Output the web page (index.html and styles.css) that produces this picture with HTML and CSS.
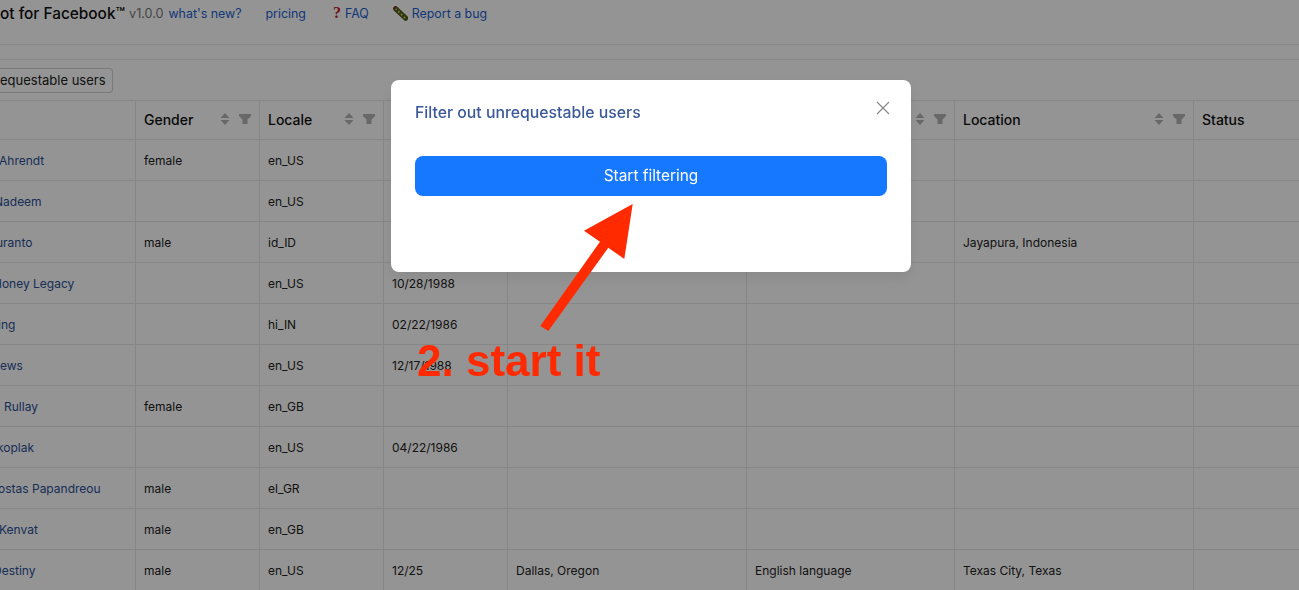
FILE: index.html
```html
<!DOCTYPE html>
<html lang="en">
<head>
  <meta charset="UTF-8" />
  <title>Filter out unrequestable users</title>
  <link rel="stylesheet" href="styles.css">
</head>
<body>
  <div class="page">
    <div class="topbar">
      <span class="brand">ot for Facebook™</span>
      <span class="version">v1.0.0</span>
      <a class="link link-new">what's new?</a>
      <a class="link link-pricing">pricing</a>
      <a class="link link-faq"><span class="mark">?</span>FAQ</a>
      <a class="link link-bug">
        <svg class="bug" viewBox="0 0 16 16" width="15" height="15">
          <path d="M3 3 L13.500 13" stroke="#4f5f1c" stroke-width="5.500" stroke-linecap="round"/>
          <path d="M1 1 L3 3" stroke="#8a3a1c" stroke-width="3.500"/>
          <path d="M4 3 L3 4 M7 5.500 L5.500 7 M10 8.500 L8.500 10 M13 11.500 L11.500 13" stroke="#c9c25c" stroke-width="1.800"/>
        </svg>
        Report a bug
      </a>
    </div>
    <div class="subbar"></div>
    <div class="toolbar">
      <button class="filter-btn">equestable users</button>
    </div>

    <table class="users">
      <colgroup>
        <col class="c-name"><col class="c-gender"><col class="c-locale"><col class="c-birth">
        <col class="c-home"><col class="c-lang"><col class="c-loc"><col class="c-status">
      </colgroup>
      <thead>
        <tr>
          <th></th>
          <th><div class="th-in">Gender<span class="tools"><svg class="sort" viewBox="0 0 10 14"><path d="M5 1 9.5 6H.5zM5 13 .5 8h9z"/></svg><svg class="funnel" viewBox="0 0 12 10"><path d="M0 0h12v2L8.500 5.500V10h-5V5.500L0 2z"/></svg></span></div></th>
          <th><div class="th-in">Locale<span class="tools"><svg class="sort" viewBox="0 0 10 14"><path d="M5 1 9.5 6H.5zM5 13 .5 8h9z"/></svg><svg class="funnel" viewBox="0 0 12 10"><path d="M0 0h12v2L8.500 5.500V10h-5V5.500L0 2z"/></svg></span></div></th>
          <th></th>
          <th></th>
          <th><div class="th-in"><span class="tools"><svg class="sort" viewBox="0 0 10 14"><path d="M5 1 9.5 6H.5zM5 13 .5 8h9z"/></svg><svg class="funnel" viewBox="0 0 12 10"><path d="M0 0h12v2L8.500 5.500V10h-5V5.500L0 2z"/></svg></span></div></th>
          <th><div class="th-in">Location<span class="tools"><svg class="sort" viewBox="0 0 10 14"><path d="M5 1 9.5 6H.5zM5 13 .5 8h9z"/></svg><svg class="funnel" viewBox="0 0 12 10"><path d="M0 0h12v2L8.500 5.500V10h-5V5.500L0 2z"/></svg></span></div></th>
          <th>Status</th>
        </tr>
      </thead>
      <tbody>
        <tr><td><a class="cut-1">Ahrendt</a></td><td>female</td><td>en_US</td><td></td><td></td><td></td><td></td><td></td></tr>
        <tr><td><a class="cut-6">Nadeem</a></td><td></td><td>en_US</td><td></td><td></td><td></td><td></td><td></td></tr>
        <tr><td><a class="cut-4">uranto</a></td><td>male</td><td>id_ID</td><td></td><td></td><td></td><td>Jayapura, Indonesia</td><td></td></tr>
        <tr><td><a class="cut-7">Honey Legacy</a></td><td></td><td>en_US</td><td>10/28/1988</td><td></td><td></td><td></td><td></td></tr>
        <tr><td><a class="cut-2">ing</a></td><td></td><td>hi_IN</td><td>02/22/1986</td><td></td><td></td><td></td><td></td></tr>
        <tr><td><a>ews</a></td><td></td><td>en_US</td><td>12/17/1988</td><td></td><td></td><td></td><td></td></tr>
        <tr><td><a class="gap">Rullay</a></td><td>female</td><td>en_GB</td><td></td><td></td><td></td><td></td><td></td></tr>
        <tr><td><a class="cut-3">koplak</a></td><td></td><td>en_US</td><td>04/22/1986</td><td></td><td></td><td></td><td></td></tr>
        <tr><td><a class="cut-2">ostas Papandreou</a></td><td>male</td><td>el_GR</td><td></td><td></td><td></td><td></td><td></td></tr>
        <tr><td><a class="cut-1">Kenvat</a></td><td>male</td><td>en_GB</td><td></td><td></td><td></td><td></td><td></td></tr>
        <tr><td><a class="cut-7">Destiny</a></td><td>male</td><td>en_US</td><td>12/25</td><td>Dallas, Oregon</td><td>English language</td><td>Texas City, Texas</td><td></td></tr>
      </tbody>
    </table>
  </div>

  <div class="mask"></div>

  <div class="modal">
    <div class="modal-head">
      <h2>Filter out unrequestable users</h2>
      <svg class="close" viewBox="0 0 14 14" width="14" height="14"><path d="M1 1 13 13M13 1 1 13"/></svg>
    </div>
    <button class="start">Start filtering</button>
  </div>

  <svg class="arrow" viewBox="0 0 110 140" width="110" height="140">
    <path d="M102.700 4 94.300 59 78.300 47.700 18.300 131 10.300 126 70 41.700 54 30.700z"/>
  </svg>
  <div class="note">2. start it</div>
</body>
</html>
```

FILE: styles.css
```css
* {
  box-sizing: border-box;
  margin: 0;
  padding: 0;
}
html, body {
  height: 590px;
  overflow: hidden;
}
body {
  background: #fff;
  color: #222;
  font-family: Inter, "Liberation Sans", sans-serif;
  font-size: 12px;
}
.page {
  width: 1299px;
  height: 590px;
  overflow: hidden;
}
.topbar {
  display: flex;
  align-items: center;
  height: 45px;
  padding-bottom: 18px;
  border-bottom: 1px solid #e8e8e8;
  font-size: 12.4px;
  white-space: nowrap;
}
.brand {
  font-size: 15.4px;
  font-weight: 500;
  color: #111;
}
.version {
  margin-left: 4px;
  font-size: 12.6px;
  color: #777;
}
.link {
  color: #1d5fd0;
}
.link-new { margin-left: 5px; }
.link-pricing { margin-left: 24px; }
.link-faq { margin-left: 27px; display: flex; align-items: center; gap: 4px; }
.link-bug { margin-left: 24px; display: flex; align-items: center; gap: 4px; }
.mark {
  color: #c41a1a;
  font-family: "Liberation Serif", serif;
  font-size: 16px;
  font-weight: 700;
  line-height: 14px;
}
.subbar {
  height: 15px;
  border-bottom: 1px solid #e8e8e8;
}
.toolbar {
  height: 40px;
  padding-top: 8px;
}
.filter-btn {
  display: block;
  width: 113px;
  height: 25px;
  border: 1px solid #d0d0d0;
  border-left: none;
  border-radius: 0 4px 4px 0;
  background: #fff;
  color: #222;
  font-family: inherit;
  font-size: 13px;
  text-align: right;
  padding: 0 8px 2px 0;
  white-space: nowrap;
  overflow: hidden;
}
.users {
  border-collapse: collapse;
  table-layout: fixed;
  width: 1299px;
}
.c-name { width: 135px; }
.c-gender { width: 124px; }
.c-locale { width: 124px; }
.c-birth { width: 124px; }
.c-home { width: 239px; }
.c-lang { width: 208px; }
.c-loc { width: 239px; }
.c-status { width: 106px; }
.users th, .users td {
  border-top: 1px solid #e8e8e8;
  border-bottom: 1px solid #e8e8e8;
  border-left: 1px solid #e8e8e8;
  padding: 0 8px 0 8.5px;
  text-align: left;
  white-space: nowrap;
  overflow: hidden;
}
.users th {
  height: 39px;
  padding-bottom: 2px;
  font-size: 14px;
  font-weight: 500;
  color: #111;
}
.users td {
  height: 41px;
  font-size: 12px;
}
.users th:first-child, .users td:first-child {
  border-left: none;
  padding-left: 0;
}
.users a {
  color: #2b4f96;
}
.users a.gap { margin-left: 4px; }
.users a.cut-1 { margin-left: -1px; }
.users a.cut-2 { margin-left: -2px; }
.users a.cut-3 { margin-left: -3px; }
.users a.cut-4 { margin-left: -4px; }
.users a.cut-6 { margin-left: -6px; }
.users a.cut-7 { margin-left: -7px; }
.th-in {
  display: flex;
  align-items: center;
  justify-content: space-between;
}
.tools {
  display: flex;
  align-items: center;
  gap: 9px;
  margin-left: auto;
}
.sort {
  width: 10px;
  height: 14px;
  fill: #b4b4b4;
}
.funnel {
  width: 12px;
  height: 10px;
  fill: #b4b4b4;
}
.mask {
  position: fixed;
  inset: 0;
  background: rgba(0, 0, 0, .42);
}
.modal {
  position: fixed;
  left: 391px;
  top: 80px;
  width: 520px;
  height: 192px;
  padding: 24px;
  background: #fff;
  border-radius: 8px;
  box-shadow: 0 6px 16px rgba(0, 0, 0, .08);
}
.modal-head {
  display: flex;
  justify-content: space-between;
  height: 52px;
}
.modal-head h2 {
  font-size: 15.8px;
  font-weight: 500;
  line-height: 18px;
  color: #3b5998;
}
.close {
  margin: -3px -3px 0 0;
  fill: none;
  stroke: #888;
  stroke-width: 1.2;
}
.start {
  display: block;
  width: 472px;
  height: 40px;
  padding-bottom: 2px;
  border: none;
  border-radius: 8px;
  background: #1677ff;
  color: #fff;
  font-family: inherit;
  font-size: 15.4px;
}
.arrow {
  position: fixed;
  left: 530px;
  top: 200px;
  fill: #ff2a00;
}
.note {
  position: fixed;
  left: 417px;
  top: 336px;
  font-family: "Liberation Sans", sans-serif;
  font-size: 44px;
  font-weight: 700;
  line-height: 50px;
  color: #ff2a00;
  white-space: nowrap;
}
```
